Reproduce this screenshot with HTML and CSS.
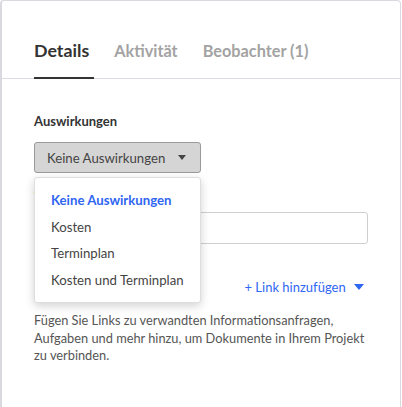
FILE: index.html
```html
<!DOCTYPE html>
<html lang="de">
<head>
<meta charset="utf-8">
<link rel="stylesheet" href="styles.css">
</head>
<body>
<div class="panel">
  <nav class="tabs">
    <span class="tab active">Details</span>
    <span class="tab">Aktivität</span>
    <span class="tab">Beobachter (1)</span>
  </nav>
  <div class="content">
    <div class="field">
      <div class="label">Auswirkungen</div>
      <div class="select-wrap">
        <button class="select">Keine Auswirkungen <span class="caret"></span></button>
        <ul class="menu">
          <li class="selected">Keine Auswirkungen</li>
          <li>Kosten</li>
          <li>Terminplan</li>
          <li>Kosten und Terminplan</li>
        </ul>
      </div>
    </div>
    <div class="field">
      <div class="label">Verknüpfte Informationen</div>
      <input class="input" type="text">
    </div>
    <div class="links-row">
      <a class="add-link">+ Link hinzufügen <span class="caret blue"></span></a>
    </div>
    <p class="help">Fügen Sie Links zu verwandten Informationsanfragen, Aufgaben und mehr hinzu, um Dokumente in Ihrem Projekt zu verbinden.</p>
  </div>
</div>
</body>
</html>
```
FILE: styles.css
```css
html, body {
  margin: 0;
  padding: 0;
  background: #fff;
  font-family: Lato, "Open Sans", sans-serif;
  color: #444;
}

.panel {
  width: 401px;
  height: 420px;
  border: 1px solid #d9d9e0;
  border-left-width: 2px;
  border-radius: 4px;
  box-sizing: border-box;
}

.tabs {
  display: flex;
  gap: 20px;
  padding: 39px 0 0 32px;
  border-bottom: 1px solid #dcdce2;
}

.tab {
  font-size: 16.3px;
  font-weight: 700;
  color: #a3a3a3;
  padding-right: 5px;
  padding-bottom: 16px;
  line-height: 21px;
  border-bottom: 2px solid transparent;
  margin-bottom: -1px;
}

.tab.active {
  color: #333;
  font-size: 17.8px;
  border-bottom-color: #333;
}

.content {
  padding: 34px 29px 0 32px;
}

.label {
  font-size: 13px;
  font-weight: 700;
  color: #333;
  line-height: 16px;
}

.field + .field {
  margin-top: 16px;
}

.select-wrap {
  position: relative;
  margin-top: 13px;
}

.select {
  display: flex;
  align-items: center;
  justify-content: space-between;
  box-sizing: border-box;
  width: 167px;
  height: 31px;
  padding: 0 14px 0 12px;
  background: #d5d5d5;
  border: 1px solid #9a9a9a;
  border-radius: 3px;
  font-family: inherit;
  font-size: 13.2px;
  color: #444;
  white-space: nowrap;
}

.caret {
  display: inline-block;
  width: 0;
  height: 0;
  border-left: 4px solid transparent;
  border-right: 4px solid transparent;
  border-top: 5px solid #444;
  margin-left: 10px;
}

.caret.blue {
  border-left-width: 5px;
  border-right-width: 5px;
  border-top: 6px solid #2f66f2;
  margin-left: 5px;
  vertical-align: 2px;
}

.menu {
  position: absolute;
  top: 35px;
  left: 0;
  width: 167px;
  box-sizing: border-box;
  margin: 0;
  padding: 9px 0 8px;
  list-style: none;
  background: #fff;
  border: 1px solid #dedede;
  border-radius: 3px;
  box-shadow: 0 3px 10px rgba(0, 0, 0, 0.18);
  z-index: 2;
}

.menu li {
  font-size: 13.2px;
  line-height: 16px;
  padding: 5px 16px 5px;
  color: #444;
  height: 16.7px;
}

.menu li.selected {
  color: #2f66f2;
  font-weight: 700;
}

.field .label + .input {
  margin-top: 7px;
}

.input {
  display: block;
  width: 334px;
  height: 32px;
  box-sizing: border-box;
  border: 1px solid #cfcfcf;
  border-radius: 3px;
}

.links-row {
  display: flex;
  justify-content: flex-end;
  margin-top: 35px;
  padding-right: 7px;
}

.add-link {
  font-size: 13px;
  line-height: 16px;
  color: #2f66f2;
}

.help {
  margin: 17px 0 0;
  font-size: 12.8px;
  line-height: 17.5px;
  color: #555;
}
```
